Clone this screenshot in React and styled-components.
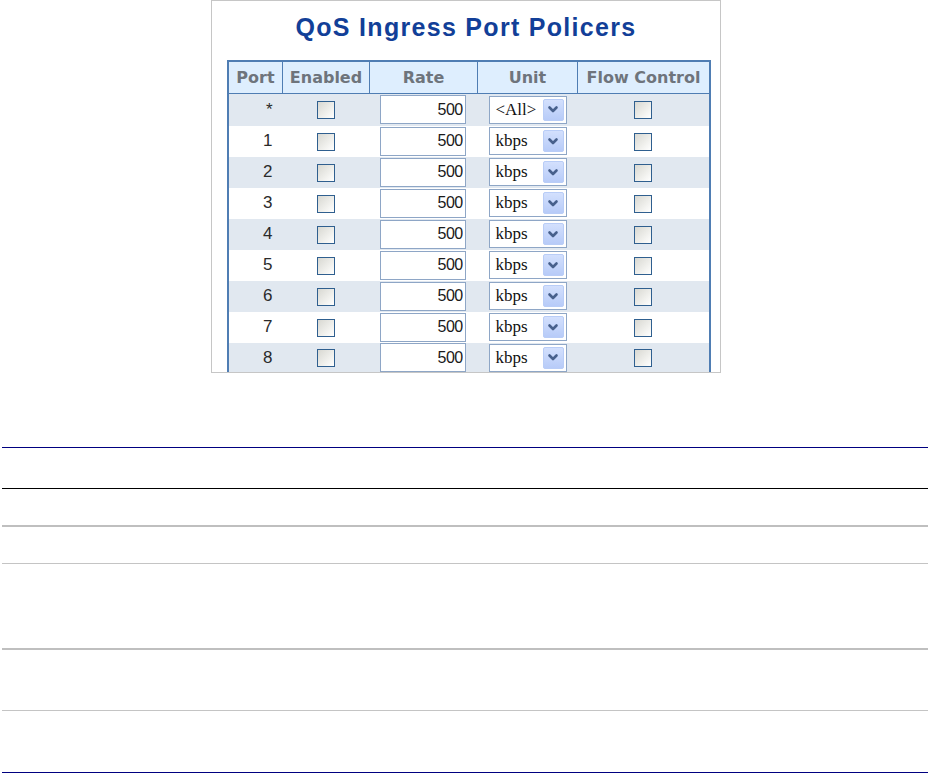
import React from "react";
import styled, { createGlobalStyle } from "styled-components";

const GlobalStyle = createGlobalStyle`
  html, body {
    margin: 0;
    padding: 0;
    background: #fff;
  }
  body {
    font-family: "Liberation Sans", Arial, sans-serif;
  }
`;

const Page = styled.div`
  width: 929px;
  display: flex;
  flex-direction: column;
`;

const Shot = styled.div`
  box-sizing: border-box;
  width: 510px;
  height: 373px;
  margin-left: 211px;
  border: 1px solid #c6c6c6;
  overflow: hidden;
  display: flex;
  flex-direction: column;
`;

const Title = styled.div`
  margin-top: 11px;
  height: 30px;
  line-height: 30px;
  text-align: center;
  font-family: "Liberation Sans", Arial, sans-serif;
  font-size: 25px;
  font-weight: 700;
  letter-spacing: 1.3px;
  color: #123f98;
`;

const PolicerTable = styled.table`
  margin-top: 18px;
  margin-left: 15px;
  width: 478px;
  border-collapse: collapse;
  border: 2px solid #4f7db3;
  table-layout: fixed;
`;

const HeadCell = styled.th`
  width: ${(p) => p.w}px;
  height: 31px;
  padding: 0;
  background: #deeefe;
  border: 1px solid #4f7db3;
  font-family: "DejaVu Sans", Verdana, sans-serif;
  font-size: 16px;
  font-weight: 700;
  color: #6e747c;
  text-align: center;
  white-space: nowrap;
`;

const Row = styled.tr`
  height: ${(p) => (p.first ? 32 : 31)}px;
  background: ${(p) => (p.shaded ? "#e1e8f0" : "#ffffff")};
`;

const Cell = styled.td`
  padding: 0 ${(p) => (p.right ? "10px" : "0")} 0 0;
  text-align: ${(p) => (p.right ? "right" : "center")};
  vertical-align: middle;
  font-family: "Liberation Sans", Arial, sans-serif;
  font-size: 17px;
  color: #2a2a2a;
`;

const Check = styled.span`
  display: inline-block;
  box-sizing: border-box;
  width: 18px;
  height: 18px;
  vertical-align: middle;
  border: 1px solid #2f5f8f;
  background: linear-gradient(135deg, #d8d8d2 0%, #f4f4f1 70%, #ffffff 100%);
`;

const RateInput = styled.input`
  box-sizing: border-box;
  display: block;
  width: 86px;
  height: 29px;
  margin-left: 10px;
  padding: 0 2px 0 0;
  border: 1px solid #8ea6c6;
  background: #fff;
  text-align: right;
  font-family: "Liberation Sans", Arial, sans-serif;
  font-size: 16px;
  letter-spacing: -0.6px;
  color: #1a1a1a;
  outline: none;
`;

const UnitBox = styled.div`
  box-sizing: border-box;
  width: 78px;
  height: 28px;
  margin-left: 11px;
  display: flex;
  align-items: center;
  justify-content: space-between;
  padding: 0 2px 0 6px;
  border: 1px solid #8ea6c6;
  background: #fff;
  font-family: "Liberation Serif", "Times New Roman", serif;
  font-size: 17px;
  color: #111;
`;

const DropButton = styled.span`
  box-sizing: border-box;
  width: 21px;
  height: 22px;
  display: flex;
  align-items: center;
  justify-content: center;
  border: 1px solid #b9cdf7;
  border-radius: 2px;
  background: linear-gradient(180deg, #d3e0fd 0%, #b7cbf8 100%);
`;

const DocTable = styled.div`
  margin-top: 74px;
  margin-left: 2px;
  width: 926px;
  display: flex;
  flex-direction: column;
  border-top: 1px solid #000080;
`;

const DocRow = styled.div`
  height: ${(p) => p.h}px;
  border-bottom: ${(p) => p.line};
`;

const Chevron = () => (
  <svg width="12" height="9" viewBox="0 0 12 9">
    <path
      d="M2.5 2.5 L6 6 L9.5 2.5"
      fill="none"
      stroke="#47608c"
      strokeWidth="2.6"
      strokeLinecap="round"
      strokeLinejoin="round"
    />
  </svg>
);

const ports = ["*", "1", "2", "3", "4", "5", "6", "7", "8"];

const docRows = [
  { h: 40, line: "1px solid #000000" },
  { h: 36, line: "2px solid #bfbfbf" },
  { h: 36, line: "1px solid #c4c4c4" },
  { h: 84, line: "2px solid #bfbfbf" },
  { h: 60, line: "1px solid #c4c4c4" },
  { h: 61, line: "1px solid #000080" },
];

function App() {
  return (
    <Page>
      <GlobalStyle />
      <Shot>
        <Title>QoS Ingress Port Policers</Title>
        <PolicerTable>
          <thead>
            <tr>
              <HeadCell w={53}>Port</HeadCell>
              <HeadCell w={86}>Enabled</HeadCell>
              <HeadCell w={107}>Rate</HeadCell>
              <HeadCell w={99}>Unit</HeadCell>
              <HeadCell w={131}>Flow Control</HeadCell>
            </tr>
          </thead>
          <tbody>
            {ports.map((p, i) => (
              <Row key={p} first={i === 0} shaded={i % 2 === 0}>
                <Cell right>{p}</Cell>
                <Cell>
                  <Check />
                </Cell>
                <Cell>
                  <RateInput defaultValue="500" readOnly />
                </Cell>
                <Cell>
                  <UnitBox>
                    <span>{i === 0 ? "<All>" : "kbps"}</span>
                    <DropButton>
                      <Chevron />
                    </DropButton>
                  </UnitBox>
                </Cell>
                <Cell>
                  <Check />
                </Cell>
              </Row>
            ))}
          </tbody>
        </PolicerTable>
      </Shot>
      <DocTable>
        {docRows.map((r, i) => (
          <DocRow key={i} h={r.h} line={r.line} />
        ))}
      </DocTable>
    </Page>
  );
}

export default App;
